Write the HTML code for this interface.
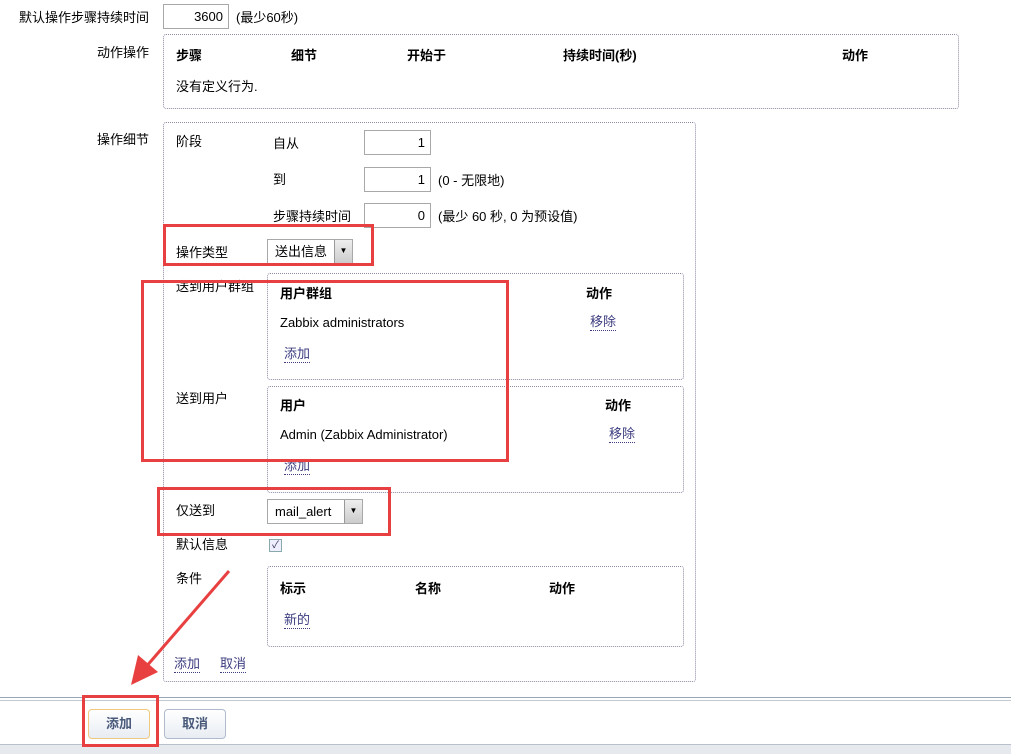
<!DOCTYPE html>
<html><head><meta charset="utf-8"><style>
body{margin:0;width:1011px;height:753px;background:#fff;position:relative;overflow:hidden;font-family:"Liberation Sans","Noto Sans CJK SC",sans-serif;font-size:13px;color:#000}
.a{position:absolute;white-space:nowrap}
.t{margin-top:-2px}
.b{font-weight:bold}
.box{position:absolute;border:1px dotted #8a8aa8;border-radius:3px}
.inp{position:absolute;border:1px solid #a8a8a8;background:#fff;text-align:right;box-sizing:border-box;padding:3px 5px;height:25px;line-height:17px}
.lnk{position:absolute;color:#3d3d80;border-bottom:1px dotted #3d3d80;line-height:16px;white-space:nowrap}
.red{position:absolute;border:3px solid #e84040;box-sizing:border-box}
.sel{position:absolute;border:1px solid #a8a8a8;background:#fff;box-sizing:border-box;height:25px;padding:3px 7px;line-height:17px}
.dd{position:absolute;right:0;top:0;width:17px;height:23px;background:linear-gradient(#eee,#ccc);border-left:1px solid #999;font-size:8px;text-align:center;line-height:22px}
.btn{position:absolute;height:28px;border-radius:4px;background:linear-gradient(#fff,#e8edf3);font-weight:bold;color:#4a5a7a;text-align:center;line-height:28px}
</style></head><body>
<div class="a t" style="left:19px;top:9px">默认操作步骤持续时间</div>
<div class="inp" style="left:163px;top:4px;width:66px">3600</div>
<div class="a t" style="left:236px;top:9px">(最少60秒)</div>

<div class="a" style="left:97px;top:42px">动作操作</div>
<div class="box" style="left:163px;top:34px;width:794px;height:73px"></div>
<div class="a b" style="left:176px;top:45px">步骤</div>
<div class="a b" style="left:291px;top:45px">细节</div>
<div class="a b" style="left:407px;top:45px">开始于</div>
<div class="a b" style="left:563px;top:45px">持续时间(秒)</div>
<div class="a b" style="left:842px;top:45px">动作</div>
<div class="a" style="left:176px;top:76px">没有定义行为.</div>

<div class="a" style="left:97px;top:129px">操作细节</div>
<div class="box" style="left:163px;top:122px;width:531px;height:558px"></div>
<div class="a" style="left:176px;top:131px">阶段</div>
<div class="a t" style="left:273px;top:135px">自从</div>
<div class="inp" style="left:364px;top:130px;width:67px">1</div>
<div class="a t" style="left:273px;top:171px">到</div>
<div class="inp" style="left:364px;top:167px;width:67px">1</div>
<div class="a t" style="left:438px;top:172px">(0 - 无限地)</div>
<div class="a t" style="left:273px;top:208px">步骤持续时间</div>
<div class="inp" style="left:364px;top:203px;width:67px">0</div>
<div class="a t" style="left:438px;top:208px">(最少 60 秒, 0 为预设值)</div>

<div class="a t" style="left:176px;top:244px">操作类型</div>
<div class="sel" style="left:267px;top:239px;width:86px">送出信息<div class="dd">▼</div></div>

<div class="a t" style="left:176px;top:278px">送到用户群组</div>
<div class="box" style="left:267px;top:273px;width:415px;height:105px"></div>
<div class="a b t" style="left:280px;top:285px">用户群组</div>
<div class="a b t" style="left:586px;top:285px">动作</div>
<div class="a" style="left:280px;top:315px">Zabbix administrators</div>
<div class="lnk" style="left:590px;top:314px">移除</div>
<div class="lnk" style="left:284px;top:346px">添加</div>

<div class="a t" style="left:176px;top:390px">送到用户</div>
<div class="box" style="left:267px;top:386px;width:415px;height:105px"></div>
<div class="a b t" style="left:280px;top:397px">用户</div>
<div class="a b t" style="left:605px;top:397px">动作</div>
<div class="a" style="left:280px;top:427px">Admin (Zabbix Administrator)</div>
<div class="lnk" style="left:609px;top:426px">移除</div>
<div class="lnk" style="left:284px;top:458px">添加</div>

<div class="a t" style="left:176px;top:502px">仅送到</div>
<div class="sel" style="left:267px;top:499px;width:96px">mail_alert<div class="dd">▼</div></div>
<div class="a t" style="left:176px;top:536px">默认信息</div>
<div class="a" style="left:269px;top:539px;width:11px;height:11px;border:1px solid #8aa;background:#eef;font-size:10px;line-height:11px;text-align:center;color:#335">✓</div>
<div class="a t" style="left:176px;top:570px">条件</div>
<div class="box" style="left:267px;top:566px;width:415px;height:79px"></div>
<div class="a b t" style="left:280px;top:580px">标示</div>
<div class="a b t" style="left:415px;top:580px">名称</div>
<div class="a b t" style="left:549px;top:580px">动作</div>
<div class="lnk" style="left:284px;top:612px">新的</div>
<div class="lnk" style="left:174px;top:656px">添加</div>
<div class="lnk" style="left:220px;top:656px">取消</div>

<div class="a" style="left:0;top:697px;width:1011px;height:1px;background:#9aa6b6"></div>
<div class="a" style="left:0;top:700px;width:1011px;height:1px;background:#c0c8d2"></div>
<div class="a" style="left:0;top:744px;width:1011px;height:9px;background:#e6e9ee;border-top:1px solid #b8c0cc"></div>
<div class="btn" style="left:88px;top:709px;width:60px;border:1px solid #f0c880">添加</div>
<div class="btn" style="left:164px;top:709px;width:60px;border:1px solid #b0bccc">取消</div>

<div class="red" style="left:163px;top:224px;width:211px;height:42px"></div>
<div class="red" style="left:141px;top:280px;width:368px;height:182px"></div>
<div class="red" style="left:157px;top:487px;width:234px;height:49px"></div>
<div class="red" style="left:82px;top:695px;width:77px;height:52px"></div>
<svg class="a" style="left:0;top:0" width="1011" height="753"><line x1="229" y1="571" x2="145" y2="668" stroke="#e84040" stroke-width="3"/><polygon points="131,685 138,655 158,672" fill="#e84040"/></svg>
</body></html>
